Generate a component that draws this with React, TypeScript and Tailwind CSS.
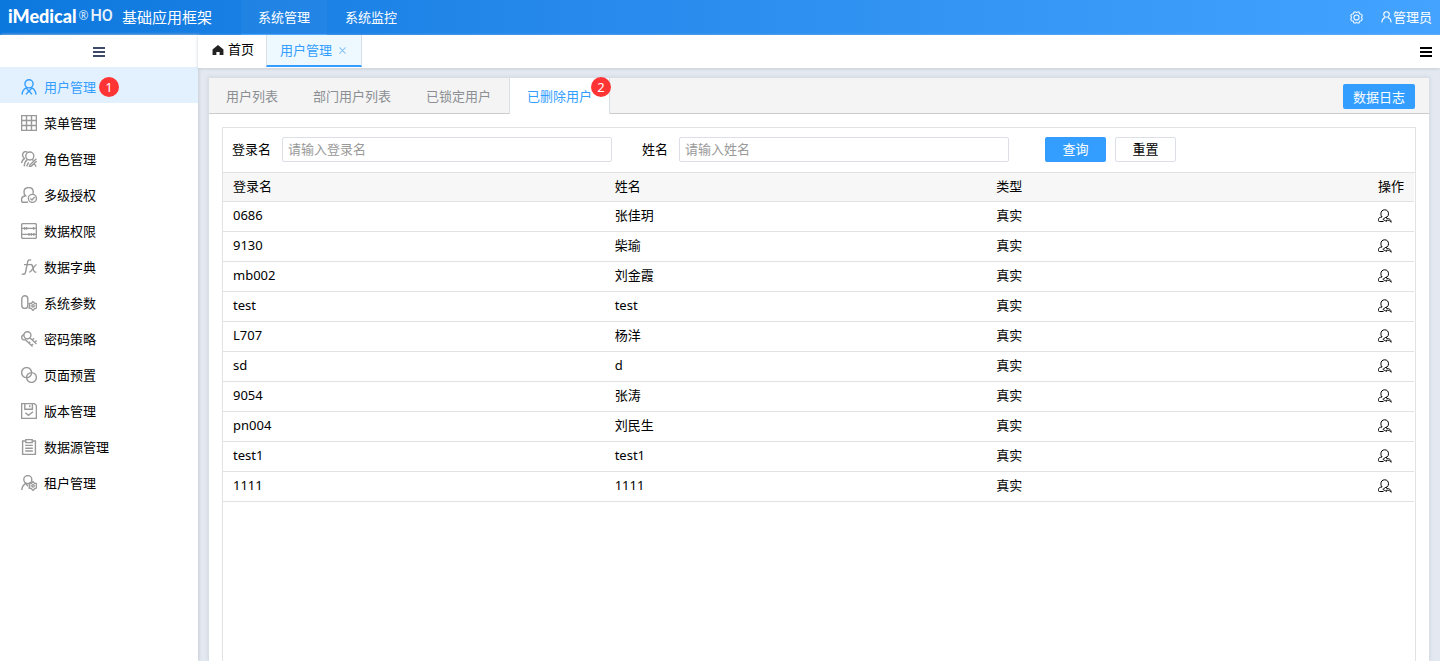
import { useState } from "react";
import type { ReactNode } from "react";

const MENU = [
  { key: "user", label: "用户管理" },
  { key: "menu", label: "菜单管理" },
  { key: "role", label: "角色管理" },
  { key: "grant", label: "多级授权" },
  { key: "dataAuth", label: "数据权限" },
  { key: "dict", label: "数据字典" },
  { key: "param", label: "系统参数" },
  { key: "password", label: "密码策略" },
  { key: "preset", label: "页面预置" },
  { key: "version", label: "版本管理" },
  { key: "source", label: "数据源管理" },
  { key: "tenant", label: "租户管理" },
];

const TABS = ["用户列表", "部门用户列表", "已锁定用户", "已删除用户"];

const ROWS = [
  { login: "0686", name: "张佳玥", type: "真实" },
  { login: "9130", name: "柴瑜", type: "真实" },
  { login: "mb002", name: "刘金霞", type: "真实" },
  { login: "test", name: "test", type: "真实" },
  { login: "L707", name: "杨洋", type: "真实" },
  { login: "sd", name: "d", type: "真实" },
  { login: "9054", name: "张涛", type: "真实" },
  { login: "pn004", name: "刘民生", type: "真实" },
  { login: "test1", name: "test1", type: "真实" },
  { login: "1111", name: "1111", type: "真实" },
];

const COG = "M12 6.6l1.500 1.700 2.300.3-.6 2.200.7 2.100-2.200.6L12 15.400l-1.700-1.900-2.200-.6.7-2.100-.6-2.200 2.300-.3z";

const ICONS: Record<string, ReactNode> = {
  user: (
    <>
      <circle cx="8" cy="4.8" r="4.1" />
      <path d="M1 15.6c.2-3.4 1.6-5.4 4.2-6.8L8 12.4l2.8-3.6c2.600 1.400 4 3.400 4.200 6.800M5 15.400L8 11.800l3 3.600" />
    </>
  ),
  menu: <path d="M.6 .6h14.8v14.8H.6zM5.5 .6v14.8M10.5 .6v14.8M.6 5.5h14.8M.6 10.5h14.8" />,
  role: (
    <>
      <circle cx="8.8" cy="5" r="4" />
      <path d="M6.200 1C3.800-.2 1.400 1.600 1.600 4.200c.1 1.600 1 2.600 1.800 3.400C1.800 8.600.8 9.800.6 12M6.400 8.400c-1.800 1.400-3 3.600-3.200 7M11 8.400l1.400 1M15.400 7.800L9 13.800l-.6 1.800 2-.5 5.200-4.900M13.200 12.600l2 3M5.600 15.400l2-4" />
    </>
  ),
  grant: (
    <>
      <path d="M7 15.2H1.6c-.6 0-1-.4-1-1v-2c0-1.8 1.8-3 4-3.4-1-.8-1.6-2.2-1.6-3.8C3 2.4 4.800.6 7.600.6s4.600 1.800 4.600 4.200c0 .8-.1 1.400-.4 2" />
      <circle cx="11.400" cy="11.400" r="4" />
      <path d="M9.400 11.400l1.600 1.500 2.600-2.800" />
    </>
  ),
  dataAuth: (
    <>
      <rect x=".6" y=".6" width="14.8" height="14.8" rx="1.4" />
      <path d="M.6 5.400h14.800M.6 11.400h14.800M3.600 4v2.800M5.600 4v2.800M12.600 4v2.800M8 10v2.800M10.400 10v2.800M12.800 10v2.800" />
    </>
  ),
  dict: <path d="M10.2 1.2C7.8.2 7 1.4 6.6 3.4L4.6 13c-.4 2-1.6 2.8-3.8 1.8M3 5.6h6M9 5.6c2-.6 2.4.6 3 3.4s1.2 4.600 3.400 4M15.600 5.600c-2 0-5 7.600-7.400 7.400" />,
  param: (
    <>
      <rect x=".8" y=".8" width="6" height="12.6" rx="3" />
      <path d={COG} fill="white" />
      <circle cx="12" cy="10.8" r="1.200" />
    </>
  ),
  password: (
    <>
      <circle cx="6.400" cy="4.200" r="3.500" />
      <path d="M3 3.400C1.400 4 .5 5.200.7 6.800c.3 1.600 1.700 2.400 3.700 2l7.200 6.600M8.800 6.800l6.800 6.200M13 7.200l-2.200 2.200M15.600 9.400l-2.400 2.400M9.200 10.800l-1.600 1.800M12 13l-1.400 1.600" />
    </>
  ),
  preset: (
    <>
      <circle cx="5.6" cy="5.6" r="5" />
      <circle cx="10.5" cy="10.5" r="4.9" />
    </>
  ),
  version: (
    <>
      <path d="M.6 .6h12.8l2 2v12.8H.6zM3.8 .6v5.6h7.6V.6M8.8 2.2v2" />
      <path d="M4.4 9.8l3 2.6 4.6-3.6" />
    </>
  ),
  source: (
    <>
      <path d="M4.8 2H1.6v13.4h12.8V2h-3.2" />
      <path d="M4.8 .6h6.4v3H4.8zM4.2 6.4h7.6M4.2 9.2h7.6M4.2 12h7.6" />
    </>
  ),
  tenant: (
    <>
      <circle cx="6.800" cy="4.600" r="4" />
      <path d="M.8 15c.2-2.800 1.400-5 3.800-6.600l2.600 2.800" />
      <path d={COG} fill="white" />
      <circle cx="12" cy="10.800" r="1.200" />
    </>
  ),
};

function MenuIcon({ name }: { name: string }) {
  return (
    <svg viewBox="0 0 16 16" className="w-4 h-4 shrink-0" fill="none" stroke="currentColor" strokeWidth="1.4">
      {ICONS[name]}
    </svg>
  );
}

function Bars() {
  return (
    <svg viewBox="0 0 12 10" className="w-3 h-[10px]" fill="currentColor">
      <path d="M0 0h12v2H0zM0 4h12v2H0zM0 8h12v2H0z" />
    </svg>
  );
}

function RestoreIcon() {
  return (
    <svg viewBox="0 0 14 14" className="w-[14px] h-[14px]" fill="none" stroke="currentColor">
      <path d="M5.500 12.500H1.500c-.6 0-1-.3-1-.9v-1.300c0-1.300 1.200-2 3.600-2.300C3.300 7.200 2.900 6.200 2.900 4.800 2.900 2.300 4.400.8 6.700.8s3.800 1.500 3.800 4c0 1.300-.4 2.300-1.200 3.100" />
      <path d="M8.500 7.800L4.800 10.400l3.700 2v-1.300c2.200 0 3.600.5 4.700 2.200-.1-2.700-1.900-3.900-4.700-4z" strokeWidth=".9" />
    </svg>
  );
}

function Badge({ children }: { children: ReactNode }) {
  return (
    <span className="flex items-center justify-center w-5 h-5 rounded-full bg-[#ff3535] text-white text-[13px] leading-5">
      {children}
    </span>
  );
}

export default function App() {
  const [menu, setMenu] = useState("user");
  const [tab, setTab] = useState("已删除用户");
  const [login, setLogin] = useState("");
  const [name, setName] = useState("");
  const [query, setQuery] = useState({ login: "", name: "" });

  const rows = ROWS.filter((r) => r.login.includes(query.login) && r.name.includes(query.name));

  const handleReset = () => {
    setLogin("");
    setName("");
    setQuery({ login: "", name: "" });
  };

  return (
    <div className="h-screen flex flex-col overflow-hidden bg-[#e4e9f1] text-black text-[13px] leading-5 font-['Noto_Sans','Noto_Sans_CJK_SC',sans-serif]">
      {/* Header */}
      <header className="h-[35px] shrink-0 flex items-center pb-px text-white bg-linear-to-r from-[#0b78de] to-[#43a3ff]">
        <div className="w-[241px] shrink-0 flex items-center pl-2">
          <span className="w-[114px] flex items-center leading-4 pb-[2px]">
            <span className="font-['Lato',sans-serif] font-black text-[18px]">iMedical</span>
            <span className="text-[12px] opacity-80 pl-[2px]">®</span>
            <span className="font-['Roboto',sans-serif] font-medium text-[16px] pl-[2px] opacity-90">HO</span>
          </span>
          <span className="text-[15px] whitespace-nowrap">基础应用框架</span>
        </div>
        <nav className="flex gap-px self-stretch -mb-px">
          <a href="#manage" className="flex items-center px-[17px] bg-white/3 border-b border-[#339eff]">系统管理</a>
          <a href="#monitor" className="flex items-center px-[17px] border-b border-transparent">系统监控</a>
        </nav>
        <div className="ml-auto flex items-center gap-[18px] pr-2">
          <button aria-label="设置">
            <svg viewBox="0 0 14 14" className="w-[13px] h-[13px] block" fill="none" stroke="currentColor" strokeWidth="1.1">
              <path d="M4.400 1h1.600L7 1.800 8 1h1.600l.8 2 2 .6.8 1.600-.8 1.800.8 1.800-.8 1.600-2 .6-.8 2H8l-1-.8-1 .8H4.400l-.8-2-2-.6-.8-1.600L1.600 7 .8 5.200l.8-1.600 2-.6z" />
              <circle cx="7" cy="7" r="2.800" />
            </svg>
          </button>
          <button className="flex items-center gap-px">
            <svg viewBox="0 0 12 13" className="w-[11px] h-3" fill="none" stroke="currentColor" strokeWidth="1.2">
              <circle cx="6" cy="3.800" r="3" />
              <path d="M1 12.400c0-3 1-4.400 3.400-5.200M11 12.400c0-3-1-4.400-3.400-5.200" />
            </svg>
            管理员
          </button>
        </div>
      </header>

      <div className="flex-1 min-h-0 flex">
        {/* Sidebar */}
        <aside className="w-[198px] shrink-0 bg-white shadow-[1px_0_3px_#c8ced6]">
          <div className="h-8 flex items-center justify-center text-[#3c4a68]">
            <button aria-label="收起菜单" className="pt-[2px]"><Bars /></button>
          </div>
          <nav>
            {MENU.map((m) => (
              <a
                key={m.key}
                href={`#${m.key}`}
                onClick={() => setMenu(m.key)}
                className={`h-9 pl-[21px] pt-[4px] flex items-center gap-[7px] ${menu === m.key ? "bg-[#e3f1ff] text-[#339eff]" : ""}`}
              >
                <span className={menu === m.key ? "" : "text-[#999999]"}>
                  <MenuIcon name={m.key} />
                </span>
                <span className="pb-px">{m.label}</span>
                {m.key === "user" && <span className="-ml-1"><Badge>1</Badge></span>}
              </a>
            ))}
          </nav>
        </aside>

        <main className="flex-1 min-w-0 flex flex-col">
          {/* Page tabs */}
          <div className="h-[33px] shrink-0 flex bg-white shadow-[0_1px_3px_#c8ced6]">
            <a href="#home" className="flex items-center gap-1 pl-[14px] pr-3 pb-[5px]">
              <svg viewBox="0 0 12 11" className="w-3 h-[10px] mt-px" fill="#222222">
                <path d="M6 0l6 5v6H7.800V7.600H4.200V11H0V5z" />
              </svg>
              首页
            </a>
            <div className="h-8 flex items-center gap-[7px] pl-[13px] pr-[15px] bg-[#edf8ff] text-[#339eff] border-x border-x-[#d8dfe6] border-b-2 border-b-[#339eff]">
              <a href="#user" className="pb-px">用户管理</a>
              <button aria-label="关闭">
                <svg viewBox="0 0 8 8" className="w-[7px] h-[7px] block" fill="none" stroke="#8cc4f5" strokeWidth="1.200">
                  <path d="M.5 .5l7 7M7.500 .5l-7 7" />
                </svg>
              </button>
            </div>
            <button aria-label="更多" className="ml-auto pr-2"><Bars /></button>
          </div>

          {/* Panel */}
          <section className="flex-1 min-h-0 flex flex-col mt-[9px] mx-[10px] bg-white border border-b-0 border-[#d9dfe7] shadow-[0_0_4px_#cdd4de]">
            <div className="h-9 shrink-0 flex bg-[#f4f4f4] shadow-[inset_0_-1px_0_#cccccc]">
              <div role="tablist" className="flex gap-px">
                {TABS.map((t) => (
                  <button
                    key={t}
                    role="tab"
                    aria-selected={tab === t}
                    onClick={() => setTab(t)}
                    className={`relative px-[17px] ${tab === t ? "bg-white text-[#339eff] border-x border-[#d9dfe7]" : "text-[#8b8f93]"}`}
                  >
                    {t}
                    {t === "已删除用户" && (
                      <span className="absolute -top-px -right-[2px]"><Badge>2</Badge></span>
                    )}
                  </button>
                ))}
              </div>
              <button className="ml-auto mr-[14px] mt-[6px] h-[25px] px-[10px] rounded-xs bg-[#339eff] text-white">
                数据日志
              </button>
            </div>

            <div className="flex-1 min-h-0 flex flex-col mx-[13px] mt-[13px] border border-b-0 border-[#e2e2e2]">
              {/* Search form */}
              <form
                onSubmit={(e) => {
                  e.preventDefault();
                  setQuery({ login, name });
                }}
                className="h-11 shrink-0 flex items-center px-[9px] pb-[2px]"
              >
                <label htmlFor="login" className="mr-[11px] whitespace-nowrap">登录名</label>
                <input
                  id="login"
                  value={login}
                  onChange={(e) => setLogin(e.target.value)}
                  placeholder="请输入登录名"
                  className="flex-1 min-w-0 max-w-[330px] h-[25px] px-[5px] border border-[#dcdfe6] rounded-xs outline-none placeholder:text-[#999999]"
                />
                <label htmlFor="name" className="ml-[30px] mr-[11px] whitespace-nowrap">姓名</label>
                <input
                  id="name"
                  value={name}
                  onChange={(e) => setName(e.target.value)}
                  placeholder="请输入姓名"
                  className="flex-1 min-w-0 max-w-[330px] h-[25px] px-[5px] border border-[#dcdfe6] rounded-xs outline-none placeholder:text-[#999999]"
                />
                <button type="submit" className="ml-9 w-[61px] h-[25px] rounded-xs bg-[#339eff] text-white">查询</button>
                <button type="button" onClick={handleReset} className="ml-[9px] w-[61px] h-[25px] rounded-xs bg-white border border-[#dcdfe6]">
                  重置
                </button>
              </form>

              <div className="border-t border-[#e2e2e2] pr-px">
                <table className="w-full table-fixed text-left">
                  <thead>
                    <tr className="h-7 bg-[#f7f7f7] border-b border-[#e2e2e2]">
                      <th className="pl-[10px] pb-px font-normal">登录名</th>
                      <th className="pl-[10px] pb-px font-normal">姓名</th>
                      <th className="pl-[10px] pb-px font-normal">类型</th>
                      <th className="w-[46px] pl-[10px] pb-px font-normal">操作</th>
                    </tr>
                  </thead>
                  <tbody>
                    {rows.map((r) => (
                      <tr key={r.login} className="h-[30px] border-b border-[#e2e2e2]">
                        <td className="pl-[10px] pb-[3px]">{r.login}</td>
                        <td className="pl-[10px] pb-[3px]">{r.name}</td>
                        <td className="pl-[10px] pb-[3px]">{r.type}</td>
                        <td className="pl-[10px]">
                          <button aria-label="恢复用户" className="block"><RestoreIcon /></button>
                        </td>
                      </tr>
                    ))}
                  </tbody>
                </table>
              </div>
            </div>
          </section>
        </main>
      </div>
    </div>
  );
}
